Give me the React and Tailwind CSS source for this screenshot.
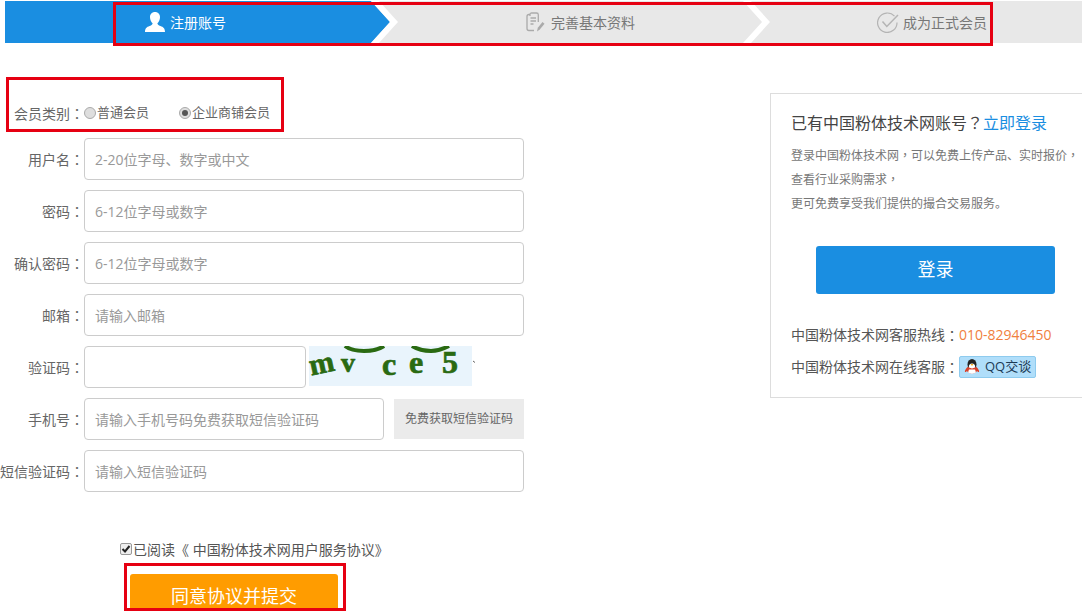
import React from "react";

function P({ children }) {
  return <span className="font-['Noto_Sans_CJK_TC',sans-serif] leading-none">{children}</span>;
}

function UserIcon() {
  return (
    <svg width="22" height="20" viewBox="0 0 22 20" fill="#fff">
      <path d="M11 0c3 0 5 2.200 5 5.200 0 2.600-1.200 4.700-2.600 6 0 1.300 1 2 3 2.700 3 1 4.600 2.400 4.600 6.100H1c0-3.700 1.600-5.100 4.600-6.100 2-.7 3-1.400 3-2.700C7.200 9.900 6 7.800 6 5.200 6 2.200 8 0 11 0z" />
    </svg>
  );
}

function DocIcon() {
  return (
    <svg width="20" height="20" viewBox="0 0 20 20" fill="none" stroke="#aaa" strokeWidth="1.300">
      <path d="M5 2.500H4C2.800 2.500 2 3.300 2 4.500v12c0 1.200.8 2 2 2h5" />
      <path d="M5 4V2.500C5 1.500 5.700 1 6.500 1h5c1 0 1.800 .8 1.800 1.800V10" />
      <path d="M5.500 6h5.500M5.500 9h5.500M5.500 12h3" />
      <path d="M12 19.500l.8-3.800 4.700-5.700 2 1.700-4.700 5.700z" fill="#aaa" stroke="none" />
    </svg>
  );
}

function CheckCircle() {
  return (
    <svg width="22" height="21" viewBox="0 0 22 21" fill="none" stroke="#b4b4b4" strokeWidth="1.200">
      <path d="M17.500 4.200A9.700 9.700 0 1 0 20 10.500" />
      <path d="M5.500 9.500l4.300 5L21 3" strokeWidth="1.500" />
    </svg>
  );
}

function Chevron({ blue }) {
  return (
    <svg width="27" height="42" viewBox="0 0 27 42" className="block shrink-0">
      {blue && <path d="M0 0l19 21L0 42z" fill="#1a8ee1" />}
      <path d="M0 0h8l19 21L8 42H0l19-21z" fill="#fff" />
    </svg>
  );
}

function Steps() {
  return (
    <div className="ml-[5px] mt-px flex h-[42px] bg-[#e8e8e8] text-[14px]">
      <div className="flex w-[366px] shrink-0 items-center bg-[#1a8ee1] pl-[139px] text-white">
        <UserIcon />
        <span className="ml-[4px]">注册账号</span>
      </div>
      <Chevron blue />
      <div className="flex w-[345px] shrink-0 items-center pl-[127px] text-[#777]">
        <DocIcon />
        <span className="ml-[6px]">完善基本资料</span>
      </div>
      <Chevron />
      <div className="flex w-[240px] shrink-0 items-center pl-[107px] text-[#777]">
        <CheckCircle />
        <span className="ml-[4px] whitespace-nowrap">成为正式会员</span>
      </div>
    </div>
  );
}

function Field({ label, placeholder, width = "w-[440px]", children }) {
  return (
    <div className="flex h-[42px] items-center">
      <div className="w-[84px] shrink-0 whitespace-nowrap text-right text-[14px] text-[#666]">{label}<P>：</P></div>
      <div className={`flex h-[42px] ${width} items-center rounded-[4px] border border-[#ccc] bg-white pl-[10px] text-[14px] text-[#999]`}>
        {placeholder}
      </div>
      {children}
    </div>
  );
}

function Radio({ checked }) {
  return (
    <span className="flex h-[12px] w-[12px] shrink-0 items-center justify-center rounded-full border border-[#aaa] bg-[#dedede]">
      {checked && <span className="h-[6px] w-[6px] rounded-full bg-[#555]" />}
    </span>
  );
}

function Captcha() {
  return (
    <div className="relative ml-[3px] h-[40px] w-[163px] self-start bg-[#e9f4fc] font-['Liberation_Serif',serif] font-bold leading-[30px] text-[#2a6a12] [-webkit-text-stroke:0.7px_#2a6a12]">
      <svg width="170" height="40" viewBox="0 0 170 40" className="absolute left-0 top-0" fill="none" stroke="#2a6a12" strokeWidth="4">
        <path d="M36 0c5 4 12 5 19 5 7 0 14-1 20-5" />
        <path d="M103 0c5 3 12 5 19 5 6 0 12-2 18-5" />
        <path d="M164 15l2 1.500" stroke="#666" strokeWidth="1" />
      </svg>
      <span className="absolute left-0 top-[2px] -rotate-12 text-[30px]">m</span>
      <span className="absolute left-[32px] top-[2px] text-[28px]">v</span>
      <span className="absolute left-[73px] top-[3px] text-[32px]">c</span>
      <span className="absolute left-[100px] top-[1px] text-[32px]">e</span>
      <span className="absolute left-[133px] top-[1px] text-[32px]">5</span>
    </div>
  );
}

function Penguin() {
  return (
    <svg width="16" height="17" viewBox="0 0 16 16">
      <ellipse cx="8" cy="6" rx="4.500" ry="5.500" fill="#222" />
      <ellipse cx="8" cy="8.500" rx="3.200" ry="3.500" fill="#fff" />
      <path d="M3.500 8.500c-2 2-3 4-2.500 5 .6.300 1.500-.5 2-1 .8 1.500 2.500 2.300 5 2.300s4.200-.8 5-2.300c.5.5 1.400 1.300 2 1 .5-1-.5-3-2.500-5L8 10z" fill="#d8402a" />
      <path d="M5 11l6 0 1 3c-2.500 1.500-5.500 1.500-8 0z" fill="#fff" />
      <path d="M6.500 5.500h3L8 7.500z" fill="#f0a818" />
    </svg>
  );
}

function RightPanel() {
  return (
    <div className="h-[305px] w-[312px] shrink-0 border-y border-l border-[#ddd] pl-[20px] pt-[17px]">
      <div className="whitespace-nowrap text-[16px] leading-[24px] text-[#444]">
        已有中国粉体技术网账号<P>？</P><span className="text-[#1a8ee1] underline decoration-transparent">立即登录</span>
      </div>
      <div className="mt-[9px] whitespace-nowrap text-[12px] leading-[24px] text-[#777]">
        <p>登录中国粉体技术网<P>，</P>可以免费上传产品、实时报价<P>，</P></p>
        <p>查看行业采购需求<P>，</P></p>
        <p>更可免费享受我们提供的撮合交易服务。</p>
      </div>
      <div className="ml-[25px] mt-[29.500px] flex h-[48px] w-[239px] items-center justify-center rounded-[3px] bg-[#1a8ee1] text-[18px] text-white">
        登录
      </div>
      <div className="mt-[29px] flex h-[24px] items-center whitespace-nowrap text-[14px] text-[#555]">
        中国粉体技术网客服热线<P>：</P><span className="text-[#f08040]">010-82946450</span>
      </div>
      <div className="mt-[8px] flex h-[24px] items-center whitespace-nowrap text-[14px] text-[#555]">
        中国粉体技术网在线客服<P>：</P>
        <span className="flex h-[22px] w-[77px] items-center gap-[5px] rounded-[2px] border border-[#8ecbee] bg-[#b0defa] pl-[4px] text-[13px] text-[#1c3a55]">
          <Penguin />QQ交谈
        </span>
      </div>
    </div>
  );
}

export default function App() {
  return (
    <div className="relative h-[611px] w-[1082px] overflow-hidden bg-white font-['Open_Sans','Noto_Sans_CJK_SC',sans-serif]">
      <Steps />
      <div className="mt-[50px] flex justify-between">
        <div className="w-[524px]">
          <div className="mt-[8px] flex h-[24px] items-center whitespace-nowrap text-[13px] text-[#666]">
            <span className="ml-[14px] w-[70px] text-[14px]">会员类别<P>：</P></span>
            <Radio />
            <span className="ml-px">普通会员</span>
            <span className="ml-[30px]" />
            <Radio checked />
            <span className="ml-px">企业商铺会员</span>
          </div>
          <div className="mt-[13px] flex flex-col gap-[10px]">
            <Field label="用户名" placeholder="2-20位字母、数字或中文" />
            <Field label="密码" placeholder="6-12位字母或数字" />
            <Field label="确认密码" placeholder="6-12位字母或数字" />
            <Field label="邮箱" placeholder="请输入邮箱" />
            <Field label="验证码" placeholder="" width="w-[222px]"><Captcha /></Field>
            <Field label="手机号" placeholder="请输入手机号码免费获取短信验证码" width="w-[300px]">
              <div className="ml-[10px] flex h-[40px] w-[130px] items-center justify-center bg-[#ebebeb] text-[12px] text-[#666]">免费获取短信验证码</div>
            </Field>
            <Field label="短信验证码" placeholder="请输入短信验证码" />
          </div>
          <div className="ml-[120px] mt-[47px] flex h-[20px] items-center whitespace-nowrap text-[14px] text-[#555]">
            <span className="flex h-[12px] w-[12px] items-center justify-center rounded-[2px] border border-[#999] bg-[#eee]">
              <svg width="10" height="10" viewBox="0 0 10 10" fill="none" stroke="#222" strokeWidth="2"><path d="M1.500 5l2.500 2.500L8.500 2" /></svg>
            </span>
            <span className="ml-px">已阅读《 中国粉体技术网用户服务协议》</span>
          </div>
          <div className="ml-[130px] mt-[15px] flex h-[44px] w-[208px] items-center justify-center rounded-[3px] bg-[#ff9c00] text-[18px] text-white">
            同意协议并提交
          </div>
        </div>
        <RightPanel />
      </div>
      <div className="absolute left-[113px] top-[2px] h-[44px] w-[880px] border-[3px] border-[#e60012]" />
      <div className="absolute left-[6px] top-[77px] h-[55px] w-[278px] border-[3px] border-[#e60012]" />
      <div className="absolute left-[124px] top-[563px] h-[48px] w-[222px] border-[3px] border-[#e60012]" />
    </div>
  );
}
